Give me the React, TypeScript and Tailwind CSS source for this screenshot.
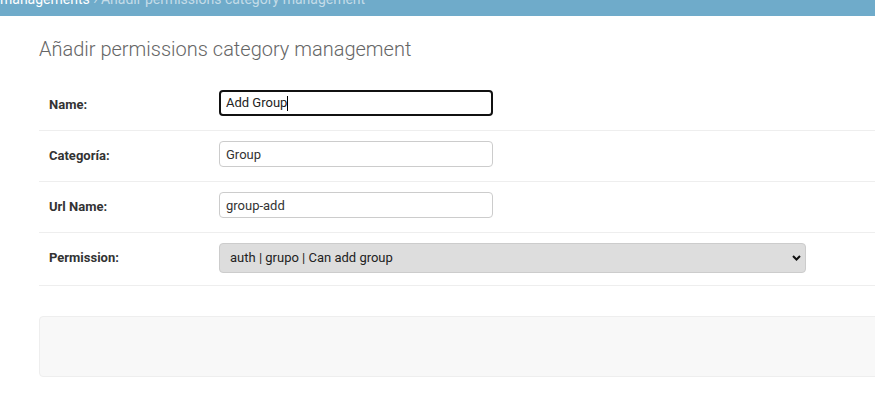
import React from "react";

const Row = ({ label, children, last }: { label: string; children: React.ReactNode; last?: boolean }) => {
    return (
        <div className={`flex items-start px-[10px] pt-[10px] border-b border-[#eeeeee] ${last ? "h-[53px]" : "h-[51px]"}`}>
            <label className="w-[170px] shrink-0 pt-[7px] text-[13px] leading-[16px] font-bold text-[#333333]">
                {label}
            </label>
            {children}
        </div>
    );
};

const inputCls =
    "w-[274px] h-[26px] px-[6px] rounded-[4px] border border-[#cccccc] bg-white text-[13px] text-[#333333] outline-none";

const App = () => {
    return (
        <div className="w-[875px] h-[420px] overflow-hidden bg-white font-['Roboto',sans-serif]">
            <div className="h-[16px] bg-[#6fabca] overflow-hidden">
                <div className="mt-[-9px] text-[14px] leading-[17px] whitespace-nowrap text-[#c4dce8]">
                    <a className="text-white">managements</a> › Añadir permissions category management
                </div>
            </div>

            <div className="w-[1000px] pl-[39px]">
                <h1 className="mt-[21px] mb-[19px] text-[20px] leading-[24px] font-light text-[#666666]">
                    Añadir permissions category management
                </h1>

                <fieldset>
                    <Row label="Name:">
                        <div className="w-[274px] h-[26px] px-[5px] rounded-[4px] border-2 border-[#111111] flex items-center text-[13px] text-[#222222]">
                            Add Group<span className="w-px h-[15px] bg-black" />
                        </div>
                    </Row>
                    <Row label="Categoría:">
                        <input className={inputCls} defaultValue="Group" readOnly />
                    </Row>
                    <Row label="Url Name:">
                        <input className={inputCls} defaultValue="group-add" readOnly />
                    </Row>
                    <Row label="Permission:" last>
                        <div className="relative w-[587px] h-[30px]">
                            <select
                                className="appearance-none w-full h-full pl-[10px] rounded-[4px] border border-[#cccccc] bg-[#dddddd] text-[13px] text-[#222222] outline-none"
                                defaultValue="1"
                            >
                                <option value="1">auth | grupo | Can add group</option>
                            </select>
                            <svg
                                className="absolute right-[5px] top-[12px] pointer-events-none"
                                width="9"
                                height="6"
                                viewBox="0 0 9 6"
                            >
                                <polyline points="1,1 4.5,4.5 8,1" fill="none" stroke="#111" strokeWidth="2" />
                            </svg>
                        </div>
                    </Row>
                </fieldset>

                <div className="mt-[30px] h-[61px] rounded-[4px] border border-[#eeeeee] bg-[#f8f8f8]" />
            </div>
        </div>
    );
};

export default App;
